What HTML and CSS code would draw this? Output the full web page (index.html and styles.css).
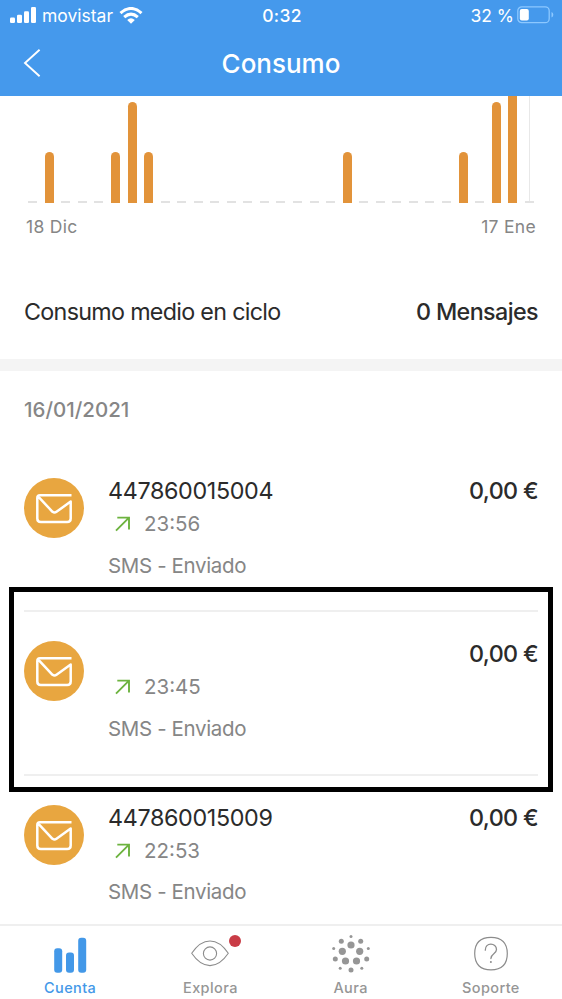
FILE: index.html
```html
<!DOCTYPE html>
<html lang="es">
<head>
<meta charset="utf-8">
<title>Consumo</title>
<link rel="stylesheet" href="styles.css">
</head>
<body>
<svg class="defs" aria-hidden="true">
  <symbol id="mail" viewBox="0 0 60 60">
    <circle cx="30" cy="30" r="30" fill="#e8a640"/>
    <path d="M47.5 17.3H16Q13.3 17.3 13.3 20V40.5Q13.3 44 16.8 44H43.2Q46.7 44 46.7 40.5V23.6L32.500 33.800Q30.500 35.200 28.500 33.800L14.500 18.800" fill="none" stroke="#fff" stroke-width="2.5" stroke-linejoin="round"/>
  </symbol>
  <symbol id="out" viewBox="0 0 16 16">
    <path d="M2.3 1.6H14V13.6M14 1.6L1 14.6" fill="none" stroke="#6db33f" stroke-width="1.9"/>
  </symbol>
</svg>

<header class="header">
  <div class="status">
    <div class="carrier">
      <svg width="26" height="17" viewBox="0 0 26 17" fill="#fff"><rect x="0" y="10.5" width="5" height="5.5" rx="1.3"/><rect x="7" y="7.7" width="5" height="8.3" rx="1.3"/><rect x="14" y="4.2" width="5" height="11.8" rx="1.3"/><rect x="21" y="0" width="5" height="16" rx="1.3"/></svg>
      <span class="carrier-name">movistar</span>
      <svg width="24" height="17" viewBox="0 0 24 17" fill="none" stroke="#fff" stroke-width="3.1"><path d="M1.5 6.1Q12-3.1 22.5 6.1"/><path d="M5.2 10.1Q12 4.2 18.8 10.1"/><path d="M8.2 13Q12 9.7 15.8 13L12 16.8Z" fill="#fff" stroke="none"/></svg>
    </div>
    <div class="clock">0:32</div>
    <div class="power">
      <span class="percent">32 %</span>
      <svg width="37" height="18" viewBox="0 0 37 18"><rect x=".8" y=".8" width="31.4" height="15.9" rx="4" fill="none" stroke="#8cc8ff" stroke-width="1.3"/><rect x="2.8" y="3" width="9" height="11.5" rx="2" fill="#fff"/><path d="M34.5 6v5.5q1.8-.8 1.8-2.75T34.5 6z" fill="#8cc8ff"/></svg>
    </div>
  </div>
  <div class="navbar">
    <svg class="back" width="18" height="30" viewBox="0 0 18 30"><path d="M16.6 1.8L2 15L16.6 28.2" fill="none" stroke="#fff" stroke-width="1.9"/></svg>
    <h1 class="title">Consumo</h1>
  </div>
</header>

<main class="content">
  <section class="chart">
    <div class="bars">
      <i></i><i class="one"></i><i></i><i></i><i></i><i class="one"></i><i class="two"></i><i class="one"></i><i></i><i></i><i></i><i></i><i></i><i></i><i></i><i></i><i></i><i></i><i></i><i class="one"></i><i></i><i></i><i></i><i></i><i></i><i></i><i class="one"></i><i></i><i class="two"></i><i class="three"></i><i class="today"></i>
    </div>
    <div class="axis"><span>18 Dic</span><span>17 Ene</span></div>
  </section>

  <section class="average"><span class="average-label">Consumo medio en ciclo</span><span class="average-value">0 Mensajes</span></section>

  <section class="log">
    <h2 class="date">16/01/2021</h2>
    <article class="entry">
      <svg class="avatar"><use href="#mail"/></svg>
      <div class="info">
        <div class="number">447860015004</div>
        <div class="time"><svg class="arrow"><use href="#out"/></svg><span>23:56</span></div>
        <div class="kind">SMS - Enviado</div>
      </div>
      <div class="cost">0,00 €</div>
    </article>
    <article class="entry">
      <svg class="avatar"><use href="#mail"/></svg>
      <div class="info">
        <div class="number"></div>
        <div class="time"><svg class="arrow"><use href="#out"/></svg><span>23:45</span></div>
        <div class="kind">SMS - Enviado</div>
      </div>
      <div class="cost">0,00 €</div>
      <div class="highlight"></div>
    </article>
    <article class="entry">
      <svg class="avatar"><use href="#mail"/></svg>
      <div class="info">
        <div class="number">447860015009</div>
        <div class="time"><svg class="arrow"><use href="#out"/></svg><span>22:53</span></div>
        <div class="kind">SMS - Enviado</div>
      </div>
      <div class="cost">0,00 €</div>
    </article>
  </section>
</main>

<nav class="tabs">
  <a class="tab active">
    <svg width="40" height="40" viewBox="0 0 40 40" fill="#4398e8"><rect x="4.2" y="14.3" width="8" height="24.5" rx="3"/><rect x="16" y="18.5" width="8" height="20.3" rx="3"/><rect x="28.2" y="3.7" width="8" height="35.1" rx="3"/></svg>
    <span>Cuenta</span>
  </a>
  <a class="tab">
    <svg width="40" height="40" viewBox="0 0 40 40" fill="none" stroke="#8c8c8c" stroke-width="1.1"><path d="M1.7 19.3Q10 7 20 7T38.3 19.3Q30 31.6 20 31.6T1.7 19.3Z" stroke-linejoin="round"/><circle cx="20" cy="19.5" r="6.6"/></svg>
    <span>Explora</span>
    <b class="badge"></b>
  </a>
  <a class="tab">
    <svg width="40" height="40" viewBox="0 0 40 40" fill="#969696"><circle cx="20" cy="11" r="3.6"/><circle cx="11.3" cy="17.3" r="3.6"/><circle cx="28.7" cy="17.3" r="3.6"/><circle cx="14.5" cy="27" r="3.6"/><circle cx="25.5" cy="27" r="3.6"/><circle cx="10.3" cy="7.3" r="2.5"/><circle cx="29.7" cy="7.3" r="2.5"/><circle cx="4.3" cy="25" r="2.5"/><circle cx="35.7" cy="25" r="2.5"/><circle cx="20" cy="36" r="2.5"/><circle cx="20" cy="2.5" r="1.5"/><circle cx="2.7" cy="14.5" r="1.5"/><circle cx="37.3" cy="14.5" r="1.5"/><circle cx="9.2" cy="34.3" r="1.5"/><circle cx="30.8" cy="34.3" r="1.5"/></svg>
    <span>Aura</span>
  </a>
  <a class="tab">
    <svg width="40" height="40" viewBox="0 0 40 40" fill="none" stroke="#8c8c8c" stroke-width="1.2"><path d="M20 3.3C30.6 3.3 36.3 9 36.3 19.6S30.600 35.900 20 35.900S3.700 30.200 3.700 19.600S9.400 3.300 20 3.300Z"/><path d="M14.3 16.2C14 8 25.5 8.5 25.5 15.5C25.5 20 19.9 19.5 19.9 24.5" stroke-width="1.3" stroke-linecap="round"/><circle cx="19.9" cy="28" r="1" fill="#8c8c8c" stroke="none"/></svg>
    <span>Soporte</span>
  </a>
</nav>
</body>
</html>
```
FILE: styles.css
```css
* { box-sizing: border-box; }
body {
  margin: 0;
  height: 999px;
  display: flex;
  flex-direction: column;
  overflow: hidden;
  background: #fff;
  color: #2b2b2b;
  font-family: Inter, "Liberation Sans", sans-serif;
}
svg { display: block; flex: none; }
.defs { position: absolute; width: 0; height: 0; }

.header { flex: none; height: 96px; background: #4599ec; color: #fff; }
.status {
  height: 32px;
  padding: 0 8px 0 10px;
  display: grid;
  grid-template-columns: 1fr auto 1fr;
  align-items: center;
  font-size: 17.5px;
  line-height: 32px;
}
.carrier { display: flex; align-items: center; gap: 6px; }
.carrier svg { margin-top: -1px; }
.clock { font-weight: 500; letter-spacing: 0.3px; }
.power { display: flex; align-items: center; justify-content: flex-end; gap: 3px; }
.power svg { margin-top: -2px; }
.navbar {
  height: 64px;
  display: grid;
  grid-template-columns: 56px 1fr 56px;
  align-items: center;
}
.back { margin: -3px 0 0 23px; }
.title {
  margin: 0;
  text-align: center;
  font-size: 26px;
  font-weight: 450;
  line-height: 62px;
}

.content { flex: 1; min-height: 0; overflow: hidden; }
.chart { height: 168px; }
.bars {
  height: 107px;
  padding: 0 24.5px;
  display: grid;
  grid-template-columns: repeat(31, 1fr);
  align-items: end;
  justify-items: center;
}
.bars i { width: 9px; height: 2px; background: #e2e2e2; }
.bars .one, .bars .two { background: #e2933a; border-radius: 5px 5px 0 0; }
.bars .one { height: 51px; }
.bars .two { height: 101px; }
.bars .three { height: 107px; background: #e2933a; }
.bars .today {
  height: 107px;
  background: linear-gradient(#e8e8e8, #e8e8e8) center top / 1px 105px no-repeat,
    linear-gradient(#e2e2e2, #e2e2e2) left bottom / 9px 2px no-repeat;
}
.axis {
  padding: 11px 26px 0;
  display: flex;
  justify-content: space-between;
  font-size: 17.5px;
  line-height: 26px;
  letter-spacing: 0.3px;
  color: #868686;
}

.average {
  height: 107px;
  padding: 32px 24px 0;
  display: flex;
  justify-content: space-between;
  font-size: 23.3px;
  line-height: 32px;
  letter-spacing: -0.7px;
  border-bottom: 12px solid #f4f4f4;
}
.average-value { font-weight: 500; letter-spacing: -0.6px; }

.date {
  margin: 0;
  height: 78px;
  padding: 24px 24px 0;
  font-size: 20.5px;
  font-weight: 450;
  line-height: 30px;
  color: #868686;
}
.entry {
  position: relative;
  height: 163.3px;
  margin: 0 24px;
  padding-top: 28px;
  display: flex;
  border-bottom: 2px solid #efefef;
}
.avatar { width: 60px; height: 60px; margin-top: 1px; }
.info { flex: 1; margin-left: 24px; }
.number, .cost { height: 28px; font-size: 23.3px; line-height: 28px; letter-spacing: -0.35px; }
.cost { font-weight: 500; letter-spacing: -0.65px; }
.time, .kind { font-size: 20.5px; line-height: 28px; color: #868686; }
.kind { letter-spacing: -0.36px; }
.time { display: flex; align-items: center; gap: 13px; margin: 5px 0 13.8px; padding-left: 7px; }
.arrow { width: 16px; height: 16px; }
.highlight {
  position: absolute;
  left: -15px;
  top: -25px;
  width: 544px;
  height: 205px;
  border: 5px solid #000;
}

.tabs {
  flex: none;
  height: 75px;
  padding-right: 1px;
  display: grid;
  grid-template-columns: repeat(4, 1fr);
  border-top: 2px solid #efefef;
  background: #fff;
}
.tab {
  position: relative;
  display: flex;
  flex-direction: column;
  align-items: center;
  padding-top: 8px;
  font-size: 14.5px;
  font-weight: 500;
  line-height: 20px;
  letter-spacing: 0.4px;
  color: #969696;
}
.tab span { margin-top: 4px; }
.active { color: #4398e8; }
.badge {
  position: absolute;
  left: 89px;
  top: 9px;
  width: 12px;
  height: 12px;
  border-radius: 50%;
  background: #c93c46;
}
```
